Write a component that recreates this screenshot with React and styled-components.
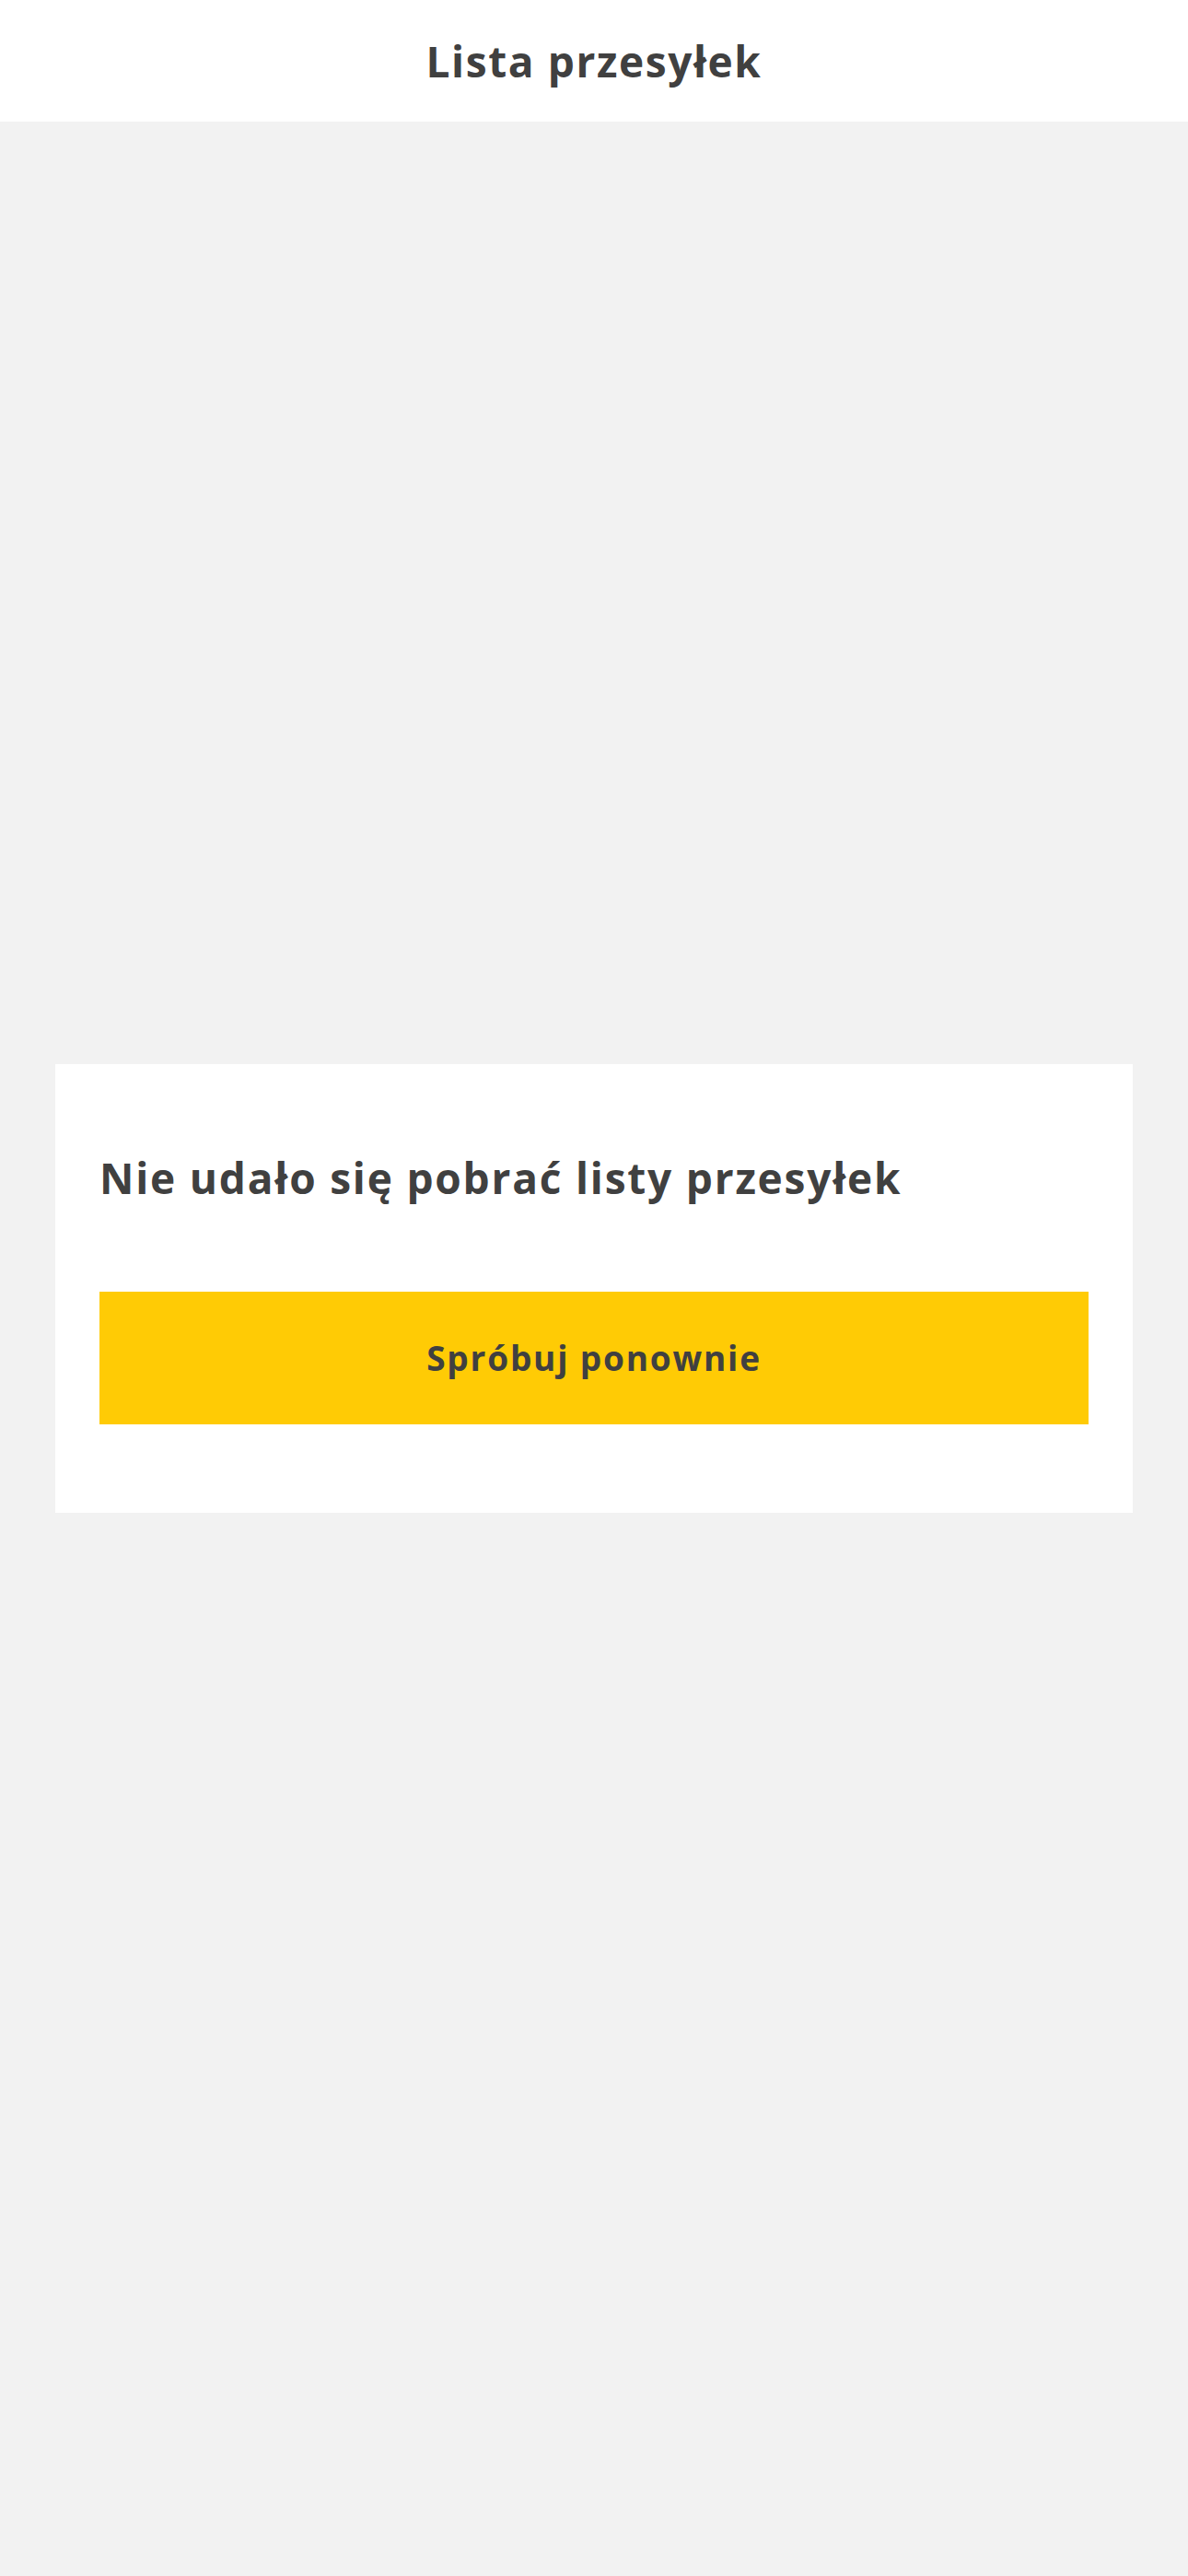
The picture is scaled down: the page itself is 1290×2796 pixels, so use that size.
import styled, { createGlobalStyle } from "styled-components";

const GlobalStyle = createGlobalStyle`
  html, body {
    margin: 0;
    padding: 0;
    background: #f2f2f2;
  }
  * {
    box-sizing: border-box;
  }
`;

const Page = styled.div`
  display: flex;
  flex-direction: column;
  min-height: 2796px;
  font-family: "Open Sans", "Noto Sans", sans-serif;
  color: #404040;
`;

const TopBar = styled.header`
  height: 132px;
  background: #fff;
  display: flex;
  align-items: center;
  justify-content: center;
`;

const Title = styled.h1`
  margin: 0;
  font-size: 46px;
  font-weight: 700;
  letter-spacing: 1.6px;
`;

const Main = styled.main`
  flex: 1;
  display: flex;
  flex-direction: column;
  justify-content: center;
  padding: 0 60px 132px;
`;

const Card = styled.section`
  background: #fff;
  padding: 95px 48px 96px;
`;

const Message = styled.h2`
  margin: 0 0 96px;
  font-size: 46px;
  line-height: 56px;
  font-weight: 700;
  letter-spacing: 1.8px;
`;

const RetryButton = styled.button`
  display: block;
  width: 100%;
  height: 144px;
  border: none;
  background: #ffcb05;
  color: #404040;
  font-family: inherit;
  font-size: 37px;
  font-weight: 700;
  letter-spacing: 1.8px;
  cursor: pointer;
`;

const App = () => {
  return (
    <Page>
      <GlobalStyle />
      <TopBar>
        <Title>Lista przesyłek</Title>
      </TopBar>
      <Main>
        <Card>
          <Message>Nie udało się pobrać listy przesyłek</Message>
          <RetryButton>Spróbuj ponownie</RetryButton>
        </Card>
      </Main>
    </Page>
  );
};

export default App;
